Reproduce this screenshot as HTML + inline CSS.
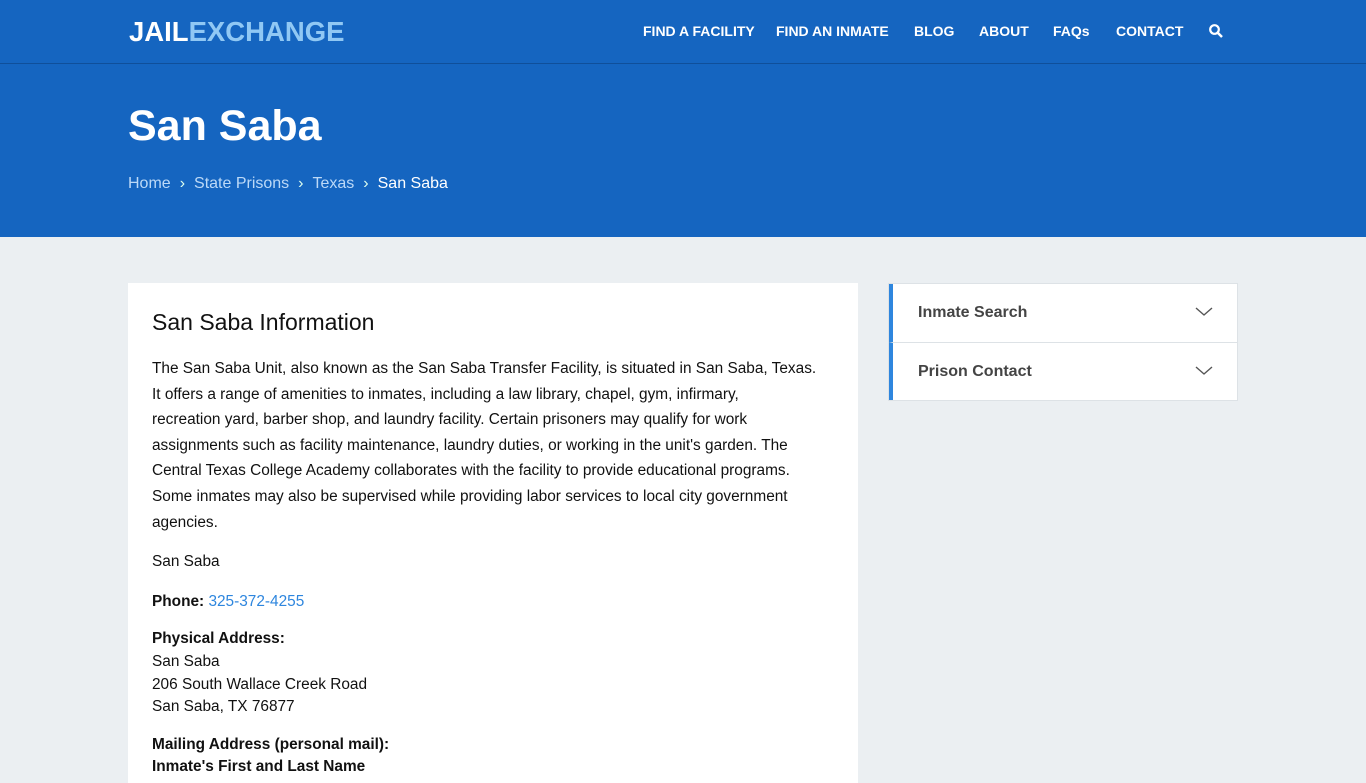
<!DOCTYPE html>
<html><head><meta charset="utf-8"><style>
*{margin:0;padding:0;box-sizing:border-box}
body{width:1366px;height:768px;overflow:hidden;background:#ebeff2;font-family:"Liberation Sans",sans-serif;color:#111}
.top{height:64px;background:#1565c0;position:relative;border-bottom:1px solid #0f4f9a;box-shadow:0 1px 3px rgba(0,0,0,.2)}
.logo{position:absolute;left:129px;top:16px;font-size:27.5px;font-weight:bold;letter-spacing:0;color:#fff}
.logo span{color:#90c8f4}
.nav{position:absolute;top:23px;font-size:14px;font-weight:bold;color:#fff}
.hero{height:173px;background:#1565c0;position:relative}
h1{position:absolute;left:128px;top:38px;font-size:43px;font-weight:bold;color:#fff}
.bc{position:absolute;left:128px;font-size:16px;color:#bcd9f7}
.bc b{color:#fff;font-weight:normal}
.bc i{font-style:normal;margin:0 9px;color:#dfe}
.card{position:absolute;left:128px;top:283px;width:730px;height:500px;background:#fff;padding:26px 24px}
h2{font-size:23px;font-weight:normal;margin-bottom:20px;color:#111}
p{font-size:15.4px;line-height:25.6px;margin-bottom:14px;white-space:nowrap}
.l{font-size:15.4px;line-height:22.6px}
a{color:#2e86de;text-decoration:none}
.side{position:absolute;left:888px;top:283px;width:350px;background:#fff;border:1px solid #dde2e6}
.it{height:58px;border-left:4px solid #2e86de;position:relative;font-size:16px;font-weight:bold;color:#444;padding:20px 0 0 25px}
.it+.it{border-top:1px solid #dde2e6}
.it svg{position:absolute;right:24px;top:23px}
</style></head><body>
<div class="top">
<div class="logo">JAIL<span>EXCHANGE</span></div>
<div class="nav" style="left:643px">FIND A FACILITY</div>
<div class="nav" style="left:776px">FIND AN INMATE</div>
<div class="nav" style="left:914px">BLOG</div>
<div class="nav" style="left:979px">ABOUT</div>
<div class="nav" style="left:1053px">FAQs</div>
<div class="nav" style="left:1116px">CONTACT</div>
<svg style="position:absolute;left:1209px;top:24px" width="14" height="14" viewBox="0 0 14 14"><circle cx="5.5" cy="5.5" r="4.3" fill="none" stroke="#fff" stroke-width="2.2"/><line x1="8.5" y1="8.5" x2="13" y2="13" stroke="#fff" stroke-width="2.5"/></svg>
</div>
<div class="hero">
<h1>San Saba</h1>
<div class="bc" style="top:111px">Home<i>›</i>State Prisons<i>›</i>Texas<i>›</i><b>San Saba</b></div>
</div>
<div class="card">
<h2>San Saba Information</h2>
<p>The San Saba Unit, also known as the San Saba Transfer Facility, is situated in San Saba, Texas.<br>It offers a range of amenities to inmates, including a law library, chapel, gym, infirmary,<br>recreation yard, barber shop, and laundry facility. Certain prisoners may qualify for work<br>assignments such as facility maintenance, laundry duties, or working in the unit's garden. The<br>Central Texas College Academy collaborates with the facility to provide educational programs.<br>Some inmates may also be supervised while providing labor services to local city government<br>agencies.</p>
<p>San Saba</p>
<p><b>Phone:</b> <a>325-372-4255</a></p>
<div class="l" style="margin-bottom:15px"><b>Physical Address:</b><br>San Saba<br>206 South Wallace Creek Road<br>San Saba, TX 76877</div>
<div class="l"><b>Mailing Address (personal mail):</b><br><b>Inmate's First and Last Name</b></div>
</div>
<div class="side">
<div class="it">Inmate Search<svg width="18" height="10" viewBox="0 0 18 10"><path d="M1 1l8 7 8-7" fill="none" stroke="#555" stroke-width="1.4"/></svg></div>
<div class="it">Prison Contact<svg width="18" height="10" viewBox="0 0 18 10"><path d="M1 1l8 7 8-7" fill="none" stroke="#555" stroke-width="1.4"/></svg></div>
</div>
</body></html>
